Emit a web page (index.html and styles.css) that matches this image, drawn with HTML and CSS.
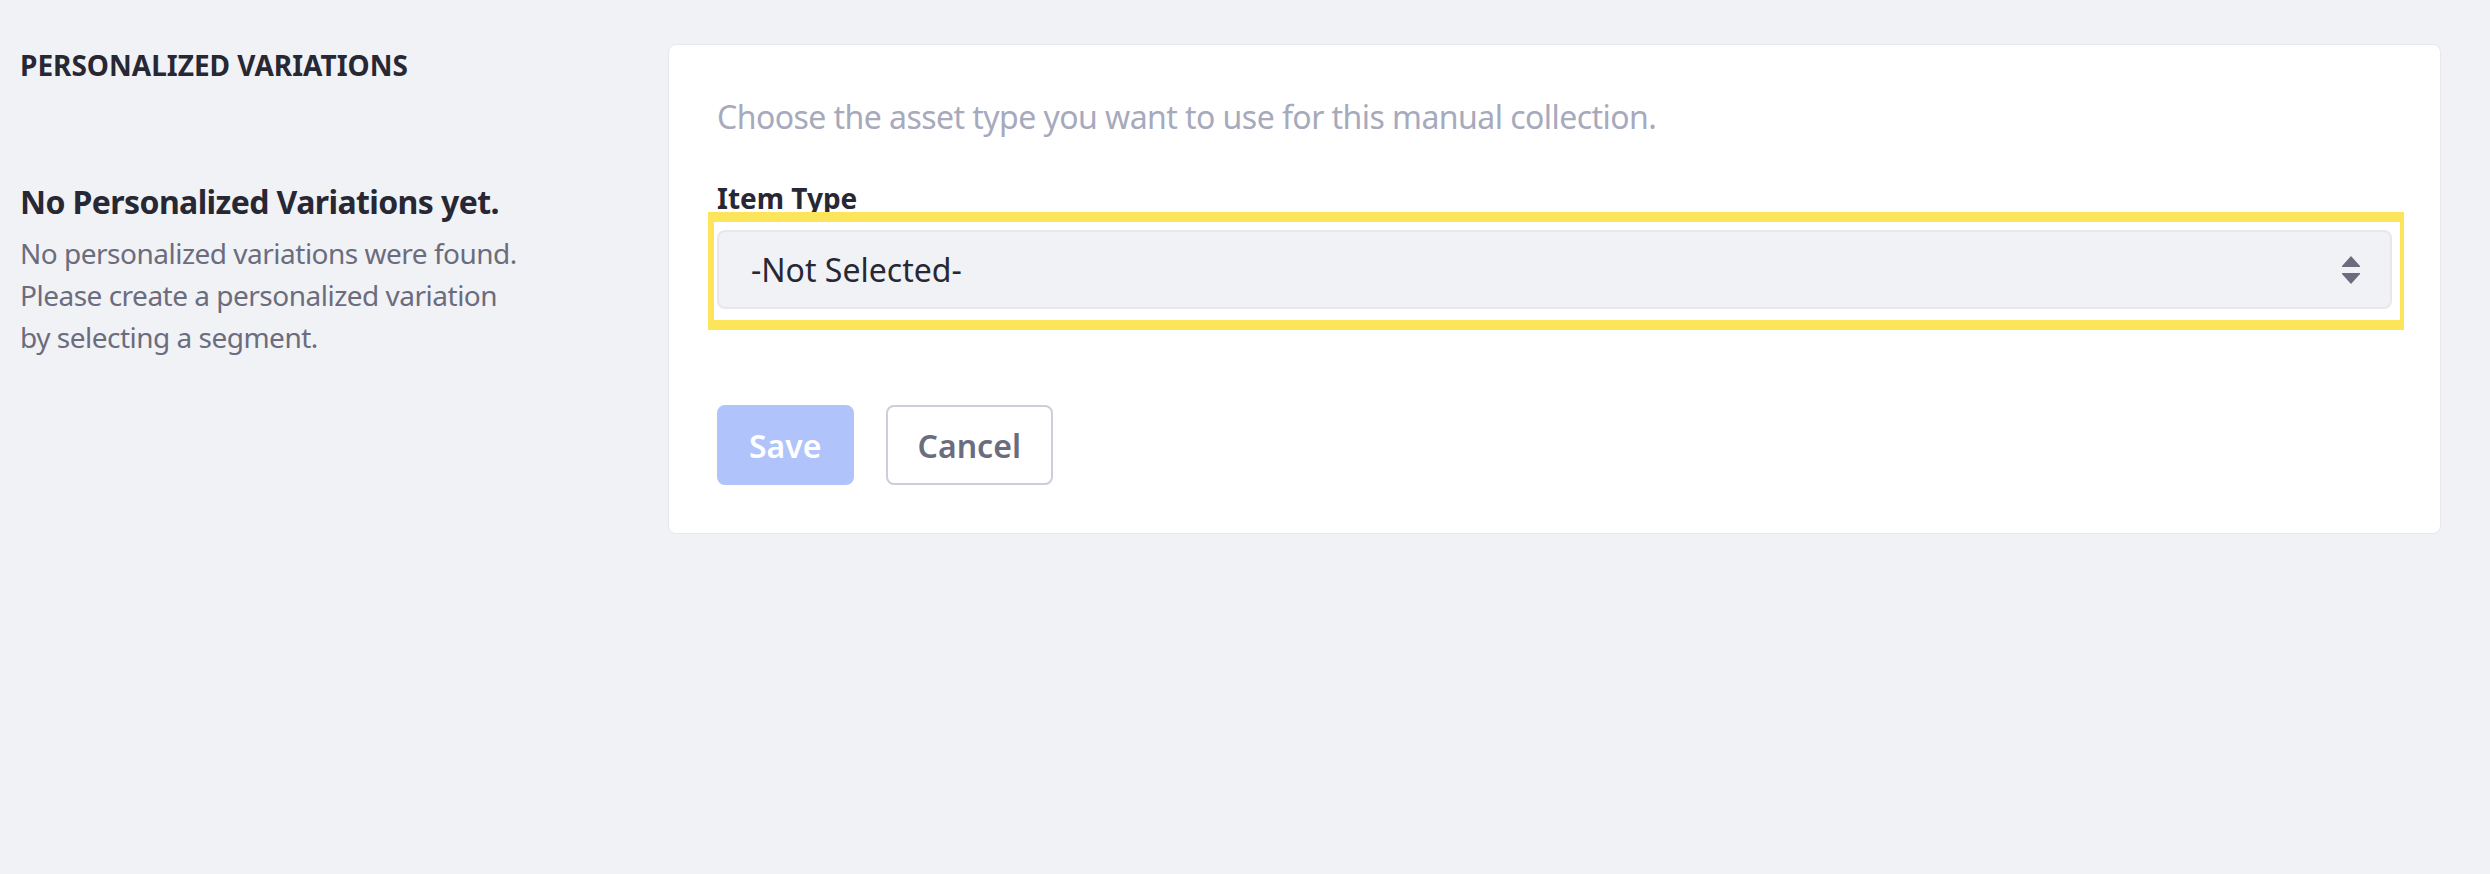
FILE: index.html
```html
<!DOCTYPE html>
<html lang="en">
<head>
<meta charset="utf-8">
<title>Personalized Variations</title>
<link rel="stylesheet" href="styles.css">
</head>
<body>
<div class="page">
  <aside class="sidebar">
    <h2 class="sidebar-title">PERSONALIZED VARIATIONS</h2>
    <div class="empty">
      <h3 class="empty-title">No Personalized Variations yet.</h3>
      <p class="empty-text">No personalized variations were found. Please create a personalized variation by selecting a segment.</p>
    </div>
  </aside>
  <main class="card">
    <p class="card-desc">Choose the asset type you want to use for this manual collection.</p>
    <div class="form-group">
      <label class="form-label" for="itemType">Item Type</label>
      <div class="select-wrap">
        <select id="itemType" class="form-select">
          <option>-Not Selected-</option>
        </select>
        <svg class="select-icon" width="18" height="28" viewBox="0 0 18 28" aria-hidden="true">
          <path d="M9 0 L18 10 L18 11 L0 11 L0 10 Z" fill="#6b6c7e"/>
          <path d="M0 17 L18 17 L18 18 L9 28 L0 18 Z" fill="#6b6c7e"/>
        </svg>
        <div class="highlight"></div>
      </div>
    </div>
    <div class="actions">
      <button class="btn btn-primary" disabled>Save</button>
      <button class="btn btn-secondary">Cancel</button>
    </div>
  </main>
</div>
</body>
</html>
```
FILE: styles.css
```css
html, body {
  margin: 0;
  padding: 0;
  background: #f1f2f5;
}
body {
  font-family: "Noto Sans", "Open Sans", sans-serif;
  color: #272833;
  width: 2490px;
  height: 874px;
  overflow: hidden;
}
.page {
  display: flex;
  align-items: flex-start;
  padding: 44px 49px 0 20px;
}
.sidebar {
  width: 508px;
  margin-right: 140px;
  flex: none;
}
.sidebar-title {
  margin: 0;
  font-size: 28px;
  line-height: 42px;
  font-weight: 700;
  color: #272833;
}
.empty {
  margin-top: 96px;
}
.empty-title {
  margin: 0 0 10px;
  font-size: 32px;
  line-height: 40px;
  font-weight: 700;
  letter-spacing: -0.6px;
  color: #272833;
}
.empty-text {
  margin: 0;
  font-size: 28px;
  line-height: 42px;
  letter-spacing: -0.5px;
  color: #6b6c7e;
}
.card {
  flex: 1;
  background: #ffffff;
  border: 1px solid #e7e7ed;
  border-radius: 8px;
  padding: 48px;
}
.card-desc {
  margin: 0 0 36px;
  font-size: 32px;
  line-height: 48px;
  letter-spacing: -0.55px;
  color: #a7a9bc;
}
.form-group {
  display: flex;
  flex-direction: column;
  gap: 11px;
}
.form-label {
  font-size: 28px;
  line-height: 42px;
  font-weight: 700;
  color: #272833;
}
.select-wrap {
  position: relative;
}
.form-select {
  display: block;
  width: 100%;
  height: 79px;
  appearance: none;
  -webkit-appearance: none;
  background: #f1f2f5;
  border: 2px solid #e7e7ed;
  border-radius: 8px;
  padding: 0 32px;
  font-family: inherit;
  font-size: 32px;
  color: #272833;
}
.select-icon {
  position: absolute;
  right: 32px;
  top: 26px;
}
.highlight {
  position: absolute;
  left: -9px;
  right: -12px;
  top: -18px;
  bottom: -21px;
  border-style: solid;
  border-color: #fde55b;
  border-width: 10px 4px 10px 6px;
  pointer-events: none;
}
.actions {
  display: flex;
  gap: 32px;
  margin-top: 96px;
}
.btn {
  height: 80px;
  padding: 0 30px;
  border-radius: 8px;
  font-family: inherit;
  font-size: 32px;
  font-weight: 600;
}
.btn-primary {
  background: #b0c4fb;
  border: 2px solid #b0c4fb;
  color: #ffffff;
}
.btn-secondary {
  background: #ffffff;
  border: 2px solid #cdced9;
  color: #6b6c7e;
}
```
